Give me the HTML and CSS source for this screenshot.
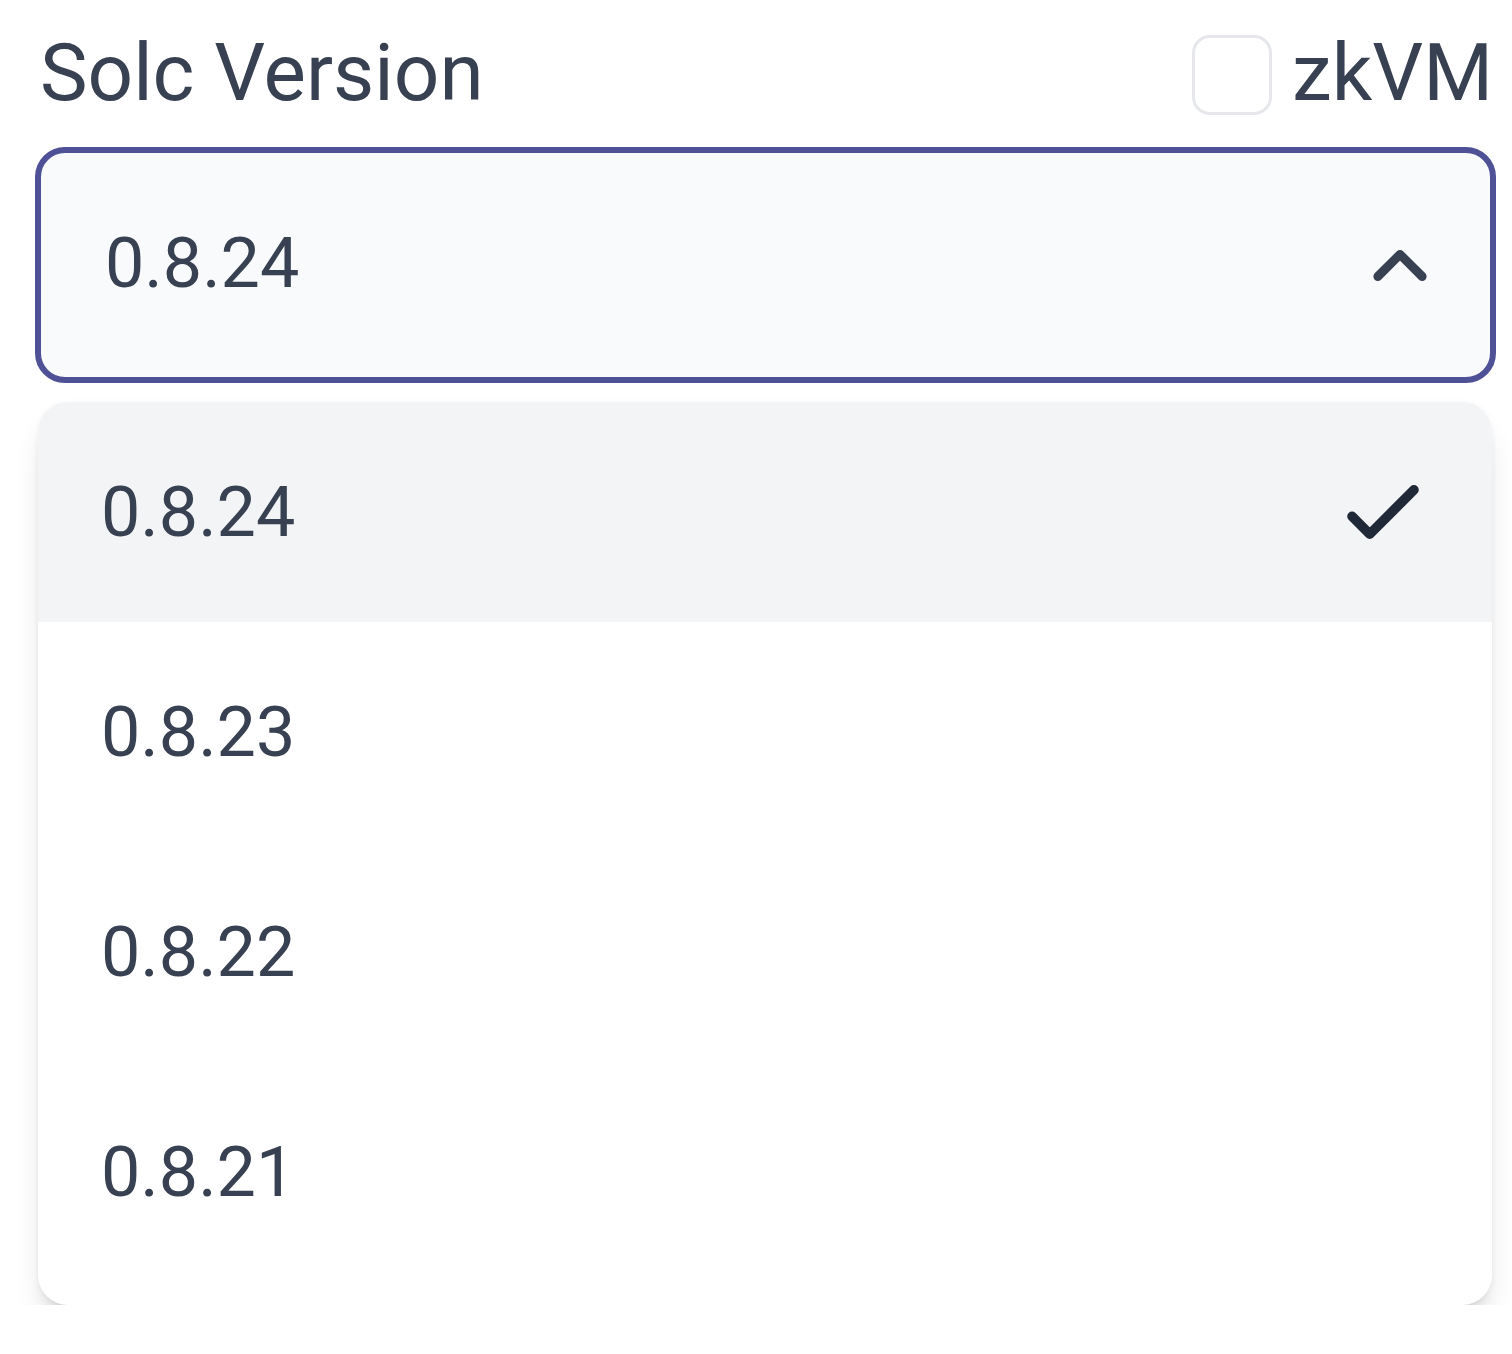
FILE: index.html
```html
<!DOCTYPE html>
<html>
<head>
<meta charset="utf-8">
<link rel="stylesheet" href="styles.css">
</head>
<body>
<div class="field">
  <div class="header">
    <span class="label">Solc Version</span>
    <label class="toggle">
      <span class="checkbox"></span>
      <span class="toggle-text">zkVM</span>
    </label>
  </div>
  <div class="select">
    <span class="select-value">0.8.24</span>
    <svg class="chevron" viewBox="0 0 24 24" width="76" height="76" fill="none" stroke="currentColor" stroke-width="2.8" stroke-linecap="round" stroke-linejoin="round"><path d="M5 15l7-7 7 7"/></svg>
  </div>
  <ul class="options">
    <li class="option active"><span>0.8.24</span>
      <svg class="check" viewBox="0 0 24 24" width="106" height="106" fill="none" stroke="currentColor" stroke-width="2.2" stroke-linecap="round" stroke-linejoin="round"><path d="M5 13l4 4L19 7"/></svg>
    </li>
    <li class="option"><span>0.8.23</span></li>
    <li class="option"><span>0.8.22</span></li>
    <li class="option"><span>0.8.21</span></li>
  </ul>
</div>
</body>
</html>
```

FILE: styles.css
```css
* { box-sizing: border-box; }
body {
  margin: 0;
  background: #ffffff;
  font-family: Roboto, "Noto Sans", sans-serif;
  color: #374151;
}
.field {
  padding: 0 19px 0 35px;
}
.header {
  display: flex;
  justify-content: space-between;
  align-items: center;
  height: 147px;
  padding-left: 5px;
}
.label {
  font-size: 80px;
  line-height: 1;
  margin-top: -2px;
}
.toggle {
  display: flex;
  align-items: center;
  gap: 20px;
  margin-top: 2px;
}
.checkbox {
  width: 80px;
  height: 80px;
  border: 3px solid #e5e7eb;
  border-radius: 18px;
  background: #fff;
}
.toggle-text {
  font-size: 80px;
  line-height: 1;
  margin-top: -4px;
}
.select {
  height: 236px;
  margin-right: -3px;
  border: 6px solid #4f5196;
  border-radius: 30px;
  background: #f9fafb;
  display: flex;
  align-items: center;
  justify-content: space-between;
  padding: 0 52px 0 64px;
}
.select-value {
  font-size: 70px;
  line-height: 1;
  margin-top: -4px;
}
.chevron {
  color: #374151;
  margin-top: 4px;
}
.options {
  list-style: none;
  margin: 19px 1px 0 3px;
  padding: 0 0 23px 0;
  background: #fff;
  border-radius: 30px;
  overflow: hidden;
  box-shadow: 0 22px 30px -6px rgba(0,0,0,0.13), 0 8px 12px -6px rgba(0,0,0,0.12), 0 0 6px rgba(0,0,0,0.03);
}
.option {
  height: 220px;
  display: flex;
  align-items: center;
  justify-content: space-between;
  padding: 0 56px 0 63px;
  font-size: 70px;
}
.option.active {
  background: #f3f4f6;
}
.check {
  color: #1f2937;
}
```
